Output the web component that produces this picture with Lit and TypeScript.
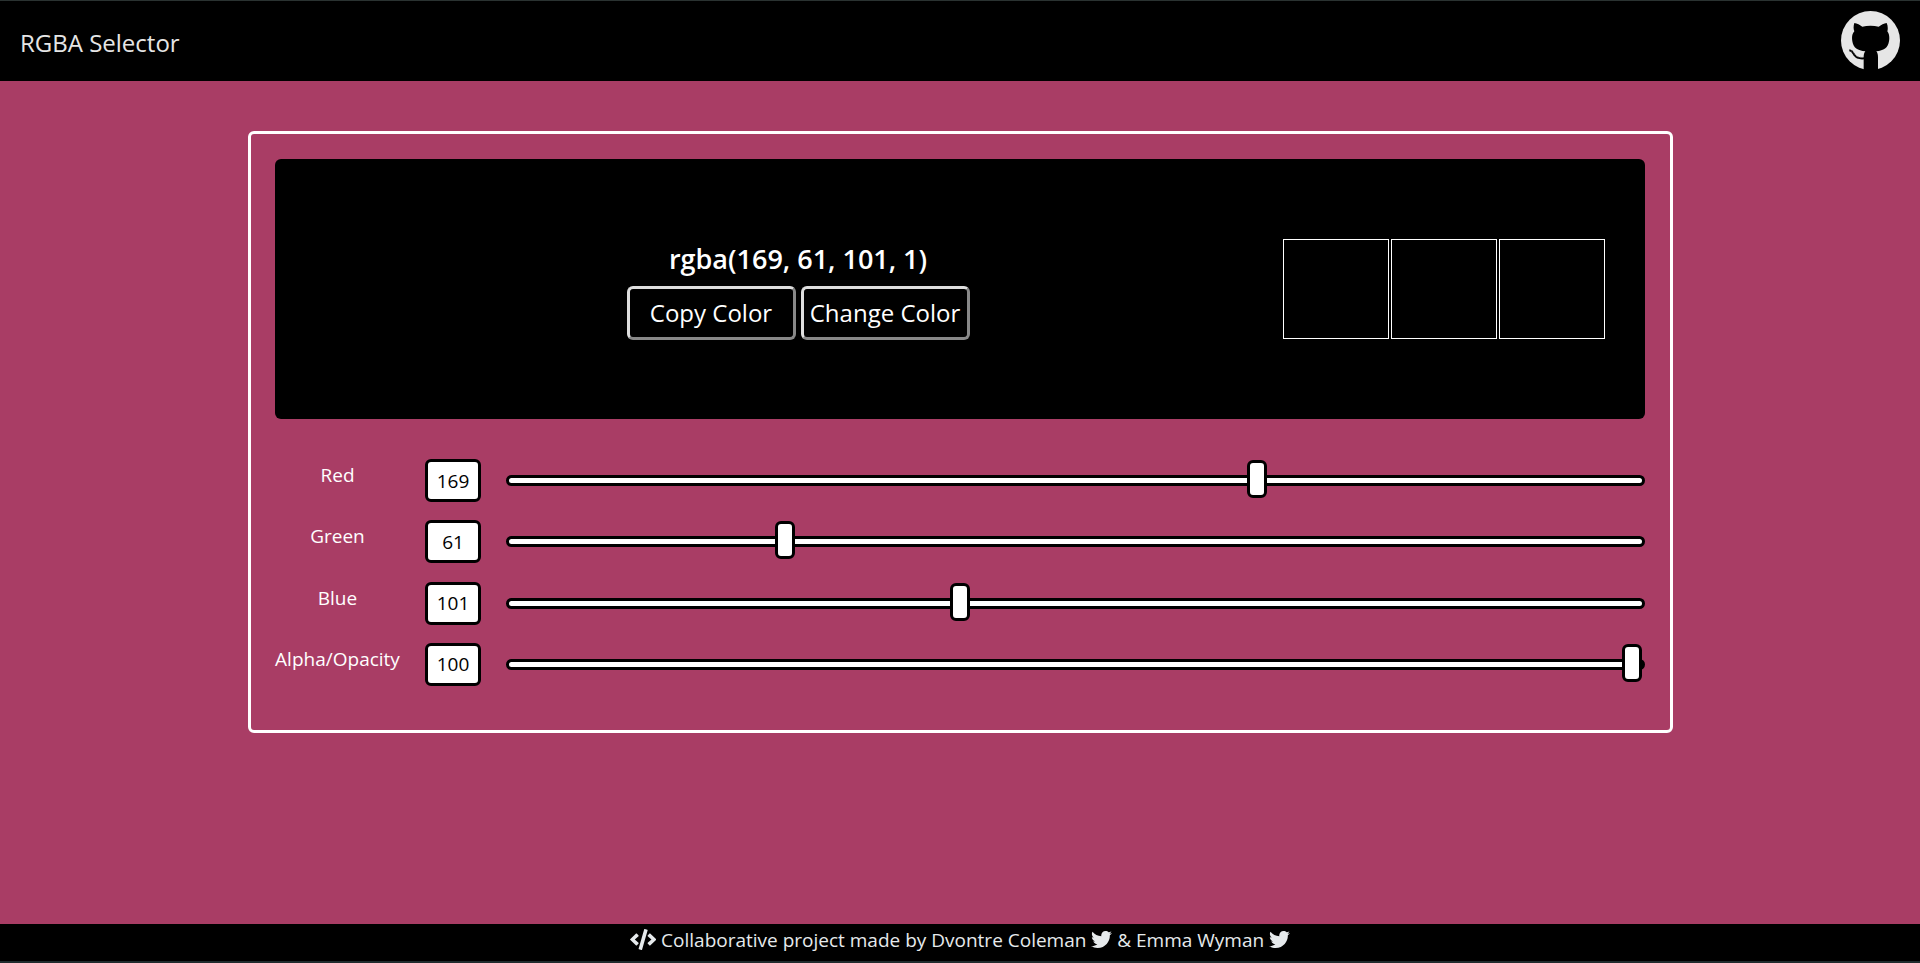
import { LitElement, html, css } from "lit";
import { customElement, state } from "lit/decorators.js";

interface Channel {
  id: string;
  label: string;
  max: number;
}

const CHANNELS: Channel[] = [
  { id: "red", label: "Red", max: 255 },
  { id: "green", label: "Green", max: 255 },
  { id: "blue", label: "Blue", max: 255 },
  { id: "alpha", label: "Alpha/Opacity", max: 100 },
];

const githubIcon = html`<svg viewBox="20 18 177 177" preserveAspectRatio="xMidYMin meet" aria-hidden="true">
  <circle class="disc" cx="108.500" cy="106.500" r="88.500" />
  <path class="cat" d="M60 54C68 55 77 60 84 65C99 61 118 61 133 65C140 60 149 55 157 54C161 63 161 72 159 79C165 87 166 97 164 109C161 129 148 137 126 139C130 144 131 149 131 157V200H88V157C88 149 89 144 93 139C70 137 57 129 54 109C52 97 53 87 60 79C57 72 57 63 60 54Z" />
  <path class="tail" d="M45 136C55 137 56 144 61 151C66 159 77 161 89 160" />
  <path class="suckers" d="M50 137C57 139 59 146 64 151C69 156 78 157 87 156" />
</svg>`;

const codeIcon = html`<svg viewBox="0 0 640 512" aria-hidden="true"><path d="M278.9 511.5l-61-17.7c-6.4-1.8-10-8.5-8.2-14.9L346.2 8.7c1.8-6.4 8.5-10 14.9-8.2l61 17.7c6.4 1.8 10 8.5 8.2 14.9L293.8 503.3c-1.900 6.400-8.500 10.100-14.900 8.200zm-114-112.200l43.500-46.400c4.600-4.900 4.300-12.700-.8-17.200L117 256l90.600-79.700c5.100-4.500 5.500-12.300.8-17.200l-43.500-46.400c-4.500-4.800-12.100-5.100-17-.5L3.800 247.200c-5.100 4.700-5.100 12.800 0 17.500l144.100 135.100c4.900 4.600 12.500 4.400 17-.5zm327.200.6l144.100-135.100c5.100-4.700 5.100-12.800 0-17.500L492.100 112.100c-4.800-4.500-12.400-4.300-17 .5L431.600 159c-4.600 4.900-4.300 12.700.8 17.200L523 256l-90.600 79.700c-5.100 4.500-5.500 12.300-.8 17.200l43.500 46.400c4.500 4.900 12.100 5.100 17 .6z"/></svg>`;

const twitterIcon = html`<svg viewBox="0 0 512 512" aria-hidden="true"><path d="M459.370 151.716c.325 4.548.325 9.097.325 13.645 0 138.720-105.583 298.558-298.558 298.558-59.452 0-114.680-17.219-161.137-47.106 8.447.974 16.568 1.299 25.340 1.299 49.055 0 94.213-16.568 130.274-44.832-46.132-.975-84.792-31.188-98.112-72.772 6.498.974 12.995 1.624 19.818 1.624 9.421 0 18.843-1.300 27.614-3.573-48.081-9.747-84.143-51.980-84.143-102.985v-1.299c13.969 7.797 30.214 12.670 47.431 13.319-28.264-18.843-46.781-51.005-46.781-87.391 0-19.492 5.197-37.360 14.294-52.954 51.655 63.675 129.300 105.258 216.365 109.807-1.624-7.797-2.599-15.918-2.599-24.040 0-57.828 46.782-104.934 104.934-104.934 30.213 0 57.502 12.670 76.670 33.137 23.715-4.548 46.456-13.320 66.599-25.340-7.798 24.366-24.366 44.833-46.132 57.827 21.117-2.273 41.584-8.122 60.426-16.243-14.292 20.791-32.161 39.308-52.628 54.253z"/></svg>`;

@customElement("app-root")
export class AppRoot extends LitElement {
  @state() private values: number[] = [169, 61, 101, 100];

  static styles = css`
    :host {
      display: flex;
      flex-direction: column;
      box-sizing: border-box;
      min-height: 100vh;
      border-top: 1px solid #2a3231;
      border-bottom: 2px solid #1f2c2e;
      background: #000;
      color: #fff;
      font-family: "Open Sans", "Noto Sans", sans-serif;
      font-size: 19px;
      line-height: 32px;
    }
    * {
      box-sizing: border-box;
    }
    .bar {
      display: flex;
      align-items: center;
      justify-content: space-between;
      padding: 10px 20px;
      background: #000;
      color: #e6e6e6;
    }
    .brand {
      padding-top: 4px;
      color: inherit;
      font-size: 24px;
      line-height: 36px;
      text-decoration: none;
    }
    .github {
      width: 59px;
      height: 60px;
    }
    .github svg {
      display: block;
      width: 100%;
      height: 100%;
    }
    .disc {
      fill: #e6e6e6;
    }
    .cat {
      fill: #000;
    }
    .tail {
      fill: none;
      stroke: #000;
      stroke-width: 6;
    }
    .suckers {
      fill: none;
      stroke: #8a8a8a;
      stroke-width: 2;
      stroke-dasharray: 3 4;
    }
    .page {
      flex: 1;
      padding: 50px 247px 50px 248px;
    }
    .card {
      padding: 25px 25px 44px 24px;
      border: 3px solid #fff;
      border-radius: 6px;
    }
    .preview {
      display: grid;
      grid-template-columns: 1fr 322px;
      align-items: center;
      height: 260px;
      padding: 0 40px 0 38px;
      border-radius: 6px;
      background: #000;
    }
    .readout {
      display: grid;
      gap: 7px;
      text-align: center;
    }
    .value {
      margin: 0;
      font-size: 27px;
      font-weight: 600;
      line-height: 40px;
    }
    .buttons {
      display: flex;
      justify-content: center;
      gap: 5px;
    }
    .button {
      width: 169px;
      height: 54px;
      padding: 0;
      border: 3px solid;
      border-color: #dedede #888 #888 #dedede;
      border-radius: 6px;
      background: #000;
      color: #fff;
      font: inherit;
      font-size: 24px;
      white-space: nowrap;
    }
    .swatches {
      display: flex;
      gap: 2px;
    }
    .swatch {
      flex: 1;
      height: 100px;
      border: 1px solid #fff;
    }
    .sliders {
      display: grid;
      align-content: space-between;
      height: 227px;
      margin-top: 40px;
    }
    .row {
      display: grid;
      grid-template-columns: 125px 56px 1fr;
      column-gap: 25px;
    }
    .label {
      text-align: center;
      white-space: nowrap;
    }
    .number {
      width: 56px;
      height: 43px;
      padding: 0;
      border: 3px solid #000;
      border-radius: 6px;
      background: #fff;
      color: #000;
      font: inherit;
      text-align: center;
      appearance: textfield;
    }
    .number::-webkit-inner-spin-button {
      display: none;
    }
    .range {
      width: 100%;
      height: 43px;
      margin: 0;
      background: transparent;
      appearance: none;
    }
    .range::-webkit-slider-runnable-track {
      height: 11px;
      border: 3px solid #000;
      border-radius: 6px;
      background: #fff;
    }
    .range::-webkit-slider-thumb {
      width: 20px;
      height: 38px;
      margin-top: -18px;
      border: 3px solid #000;
      border-radius: 6px;
      background: #fff;
      appearance: none;
    }
    .credits {
      padding-bottom: 5px;
      background: #000;
      color: #e6eaec;
      text-align: center;
    }
    .credits svg {
      height: 21px;
      fill: currentColor;
      vertical-align: -3px;
    }
    .credits a {
      color: inherit;
      text-decoration: none;
    }
  `;

  private get color(): string {
    const [r, g, b, a] = this.values;
    return `rgba(${r}, ${g}, ${b}, ${a / 100})`;
  }

  private setChannel(index: number, event: Event) {
    const next = Number((event.target as HTMLInputElement).value);
    this.values = this.values.map((v, i) => (i === index ? next : v));
  }

  private randomize() {
    const pick = () => Math.floor(Math.random() * 256);
    this.values = [pick(), pick(), pick(), this.values[3]];
  }

  private copy() {
    navigator.clipboard?.writeText(this.color);
  }

  render() {
    return html`
      <header class="bar">
        <a class="brand" href="#">RGBA Selector</a>
        <a class="github" href="#" aria-label="GitHub">${githubIcon}</a>
      </header>
      <main class="page" style="background:${this.color}">
        <section class="card">
          <div class="preview">
            <div class="readout">
              <h1 class="value">${this.color}</h1>
              <div class="buttons">
                <button class="button" @click=${this.copy}>Copy Color</button>
                <button class="button" @click=${this.randomize}>Change Color</button>
              </div>
            </div>
            <div class="swatches">
              <div class="swatch"></div>
              <div class="swatch"></div>
              <div class="swatch"></div>
            </div>
          </div>
          <div class="sliders">
            ${CHANNELS.map(
              (c, i) => html`
                <div class="row">
                  <label class="label" for=${c.id}>${c.label}</label>
                  <input
                    class="number"
                    id=${c.id}
                    type="number"
                    min="0"
                    max=${c.max}
                    .value=${String(this.values[i])}
                    @input=${(e: Event) => this.setChannel(i, e)}
                  />
                  <input
                    class="range"
                    type="range"
                    aria-label=${c.label}
                    min="0"
                    max=${c.max}
                    .value=${String(this.values[i])}
                    @input=${(e: Event) => this.setChannel(i, e)}
                  />
                </div>
              `,
            )}
          </div>
        </section>
      </main>
      <footer class="credits">
        ${codeIcon} Collaborative project made by Dvontre Coleman
        <a href="#" aria-label="Dvontre Coleman on Twitter">${twitterIcon}</a> &amp; Emma Wyman
        <a href="#" aria-label="Emma Wyman on Twitter">${twitterIcon}</a>
      </footer>
    `;
  }
}
